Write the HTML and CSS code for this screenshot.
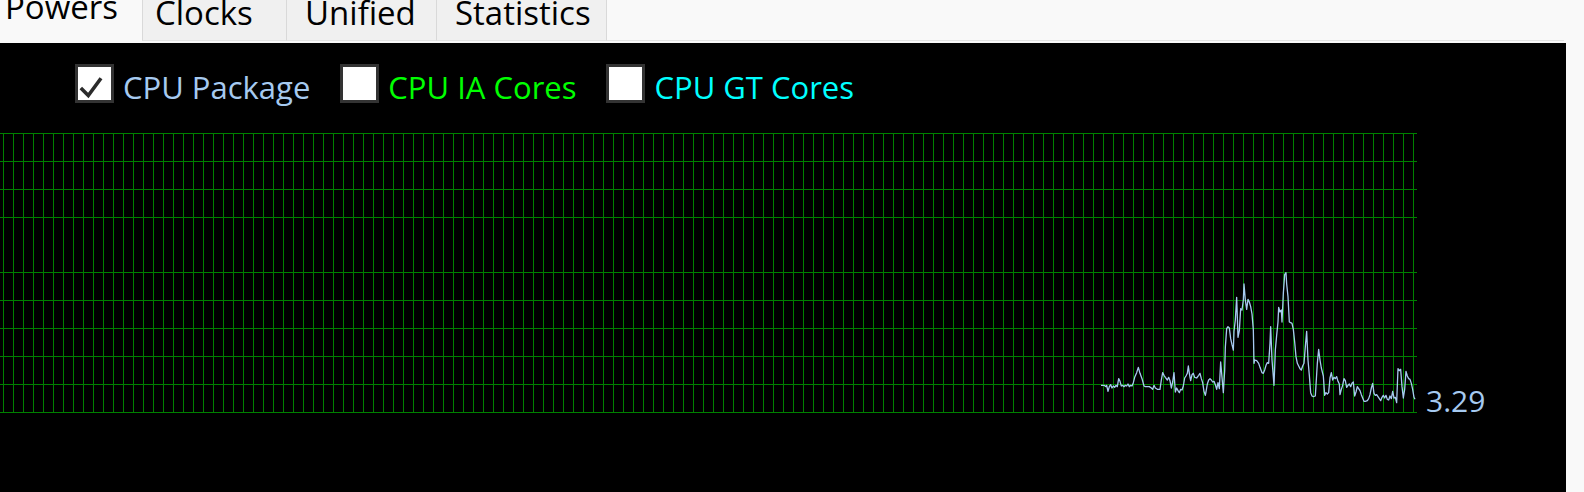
FILE: index.html
```html
<!DOCTYPE html>
<html>
<head>
<meta charset="utf-8">
<link rel="stylesheet" href="styles.css">
</head>
<body>
<div class="window">
  <div class="tabstrip">
    <div class="tab tab-powers active"><span class="tab-label">Powers</span></div>
    <div class="tab tab-clocks"><span class="tab-label">Clocks</span></div>
    <div class="tab tab-unified"><span class="tab-label">Unified</span></div>
    <div class="tab tab-stats"><span class="tab-label">Statistics</span></div>
    <div class="tab-fill"></div>
  </div>
  <div class="panel">
    <div class="legend">
      <div class="item item-pkg">
        <span class="box">
          <svg class="check" width="33" height="33" viewBox="0 0 33 33"><polyline points="2.8,21 10.3,28.6 23,11.3" fill="none" stroke="#2b2b2b" stroke-width="3.6"/></svg>
        </span>
        <span class="txt">CPU Package</span>
      </div>
      <div class="item item-ia">
        <span class="box"></span>
        <span class="txt">CPU IA Cores</span>
      </div>
      <div class="item item-gt">
        <span class="box"></span>
        <span class="txt">CPU GT Cores</span>
      </div>
    </div>
    <div class="chart">
      <svg class="plot" width="1417" height="293" viewBox="0 0 1417 293">
        <defs>
          <pattern id="vgrid" x="3" y="0" width="10" height="293" patternUnits="userSpaceOnUse">
            <rect x="0" y="0" width="1" height="293" fill="#008000"/>
          </pattern>
        </defs>
        <rect x="0" y="13" width="1417" height="280" fill="url(#vgrid)"/>
        <g fill="#008000">
          <rect x="0" y="13" width="1417" height="1"/>
          <rect x="0" y="41" width="1417" height="1"/>
          <rect x="0" y="69" width="1417" height="1"/>
          <rect x="0" y="97" width="1417" height="1"/>
          <rect x="0" y="152" width="1417" height="1"/>
          <rect x="0" y="180" width="1417" height="1"/>
          <rect x="0" y="208" width="1417" height="1"/>
          <rect x="0" y="236" width="1417" height="1"/>
          <rect x="0" y="264" width="1417" height="1"/>
          <rect x="0" y="292" width="1417" height="1"/>
        </g>
        <g transform="translate(1080,140) scale(0.33333)">
          <polyline fill="none" stroke="#a6caf0" stroke-width="1.3" vector-effect="non-scaling-stroke" stroke-linejoin="round"
            points="63,376 72,376 78,380 80,376 84,394 88,380 92,374 96,384 100,378 104,382 108,376 112,380 116,356 120,364 124,378 128,376 132,380 136,376 140,378 144,372 148,380 152,376 156,378 160,368 164,352 170,338 175,322 180,340 186,356 192,378 196,380 200,380 208,380 214,384 218,388 222,376 226,384 232,388 240,388 244,360 248,338 252,346 256,352 262,360 266,352 270,362 274,384 278,366 282,338 286,396 290,384 294,392 298,398 302,388 306,390 310,378 314,354 318,348 322,340 325,318 328,340 332,362 336,344 340,340 344,352 350,354 356,346 360,340 364,356 368,368 372,394 376,406 378,396 382,372 386,360 390,356 394,360 398,366 402,364 406,374 410,388 414,368 418,386 422,306 426,352 430,398 434,332 436,262 440,206 444,200 448,204 452,236 456,254 460,270 462,214 466,180 470,112 474,232 478,212 482,146 486,150 490,120 492,72 496,120 500,148 504,118 508,126 512,140 516,162 520,210 522,310 524,300 530,302 536,310 540,322 546,338 550,340 554,330 558,316 562,308 566,310 570,250 572,200 576,300 580,350 582,376 586,270 590,226 594,186 596,142 600,156 604,150 606,186 610,100 614,44 618,38 620,72 624,110 628,186 632,188 636,190 640,208 644,246 648,290 652,310 656,318 660,326 664,330 668,318 672,310 676,260 680,214 684,300 688,346 692,398 696,408 700,410 706,408 708,376 712,310 716,268 720,300 724,324 728,340 730,348 734,406 738,398 742,402 746,398 750,354 754,338 758,360 762,352 766,356 770,350 774,364 778,372 780,404 784,388 788,376 792,356 796,362 800,382 804,376 808,372 812,380 816,370 820,366 824,408 828,396 832,380 836,386 840,392 844,404 848,414 852,424 856,424 862,422 866,416 870,404 874,384 878,370 882,400 886,406 890,404 894,410 898,416 902,422 906,412 910,406 914,414 918,406 922,418 926,420 930,408 934,416 938,394 942,414 946,412 950,428 954,326 958,332 962,328 966,380 970,414 974,388 978,334 982,348 986,356 990,358 994,370 998,388 1002,412 1005,418"/>
        </g>
      </svg>
      <span class="value">3.29</span>
    </div>
  </div>
</div>
</body>
</html>
```

FILE: styles.css
```css
html, body {
  margin: 0;
  padding: 0;
}

body {
  width: 1584px;
  height: 492px;
  overflow: hidden;
  background: #f9f9f9;
  font-family: "Open Sans", "Noto Sans", "DejaVu Sans", sans-serif;
}

.window {
  width: 1584px;
}

.tabstrip {
  display: flex;
  height: 41px;
  width: 1564px;
}

.tab {
  box-sizing: border-box;
  height: 41px;
  background: #f0f0f0;
  border-left: 1px solid #d9d9d9;
  border-bottom: 1px solid #e3e3e3;
  font-size: 33px;
  color: #000;
  white-space: nowrap;
}

.tab-label {
  display: block;
  line-height: 26px;
}

.tab.active {
  background: #f9f9f9;
  border: none;
  width: 142px;
  padding-left: 5px;
}

.tab.active .tab-label {
  line-height: 13px;
}

.tab-clocks {
  width: 144px;
  padding-left: 12px;
}

.tab-unified {
  width: 150px;
  padding-left: 18px;
}

.tab-stats {
  width: 171px;
  padding-left: 18px;
  border-right: 1px solid #d9d9d9;
}

.tab-fill {
  flex: 1;
  border-bottom: 1px solid #e3e3e3;
}

.panel {
  margin-top: 2px;
  width: 1566px;
  height: 449px;
  background: #000;
}

.legend {
  display: flex;
  align-items: center;
  padding-top: 21px;
  padding-left: 75px;
  height: 39px;
}

.item {
  display: flex;
  align-items: center;
  margin-right: 30px;
}

.box {
  box-sizing: border-box;
  width: 39px;
  height: 39px;
  border: 3px solid #333333;
  background: #ffffff;
  display: block;
}

.check {
  display: block;
}

.txt {
  font-size: 31px;
  margin-left: 9px;
  line-height: 39px;
  position: relative;
  top: 4px;
}

.item-pkg .txt { color: #a6caf0; }
.item-ia .txt { color: #00ff00; }
.item-gt .txt { color: #00ffff; }

.chart {
  display: flex;
  align-items: flex-end;
  margin-top: 17px;
}

.plot {
  display: block;
  flex: none;
}

.value {
  color: #a6caf0;
  font-size: 30px;
  line-height: 30px;
  margin-left: 9px;
  margin-bottom: -3px;
}
```
